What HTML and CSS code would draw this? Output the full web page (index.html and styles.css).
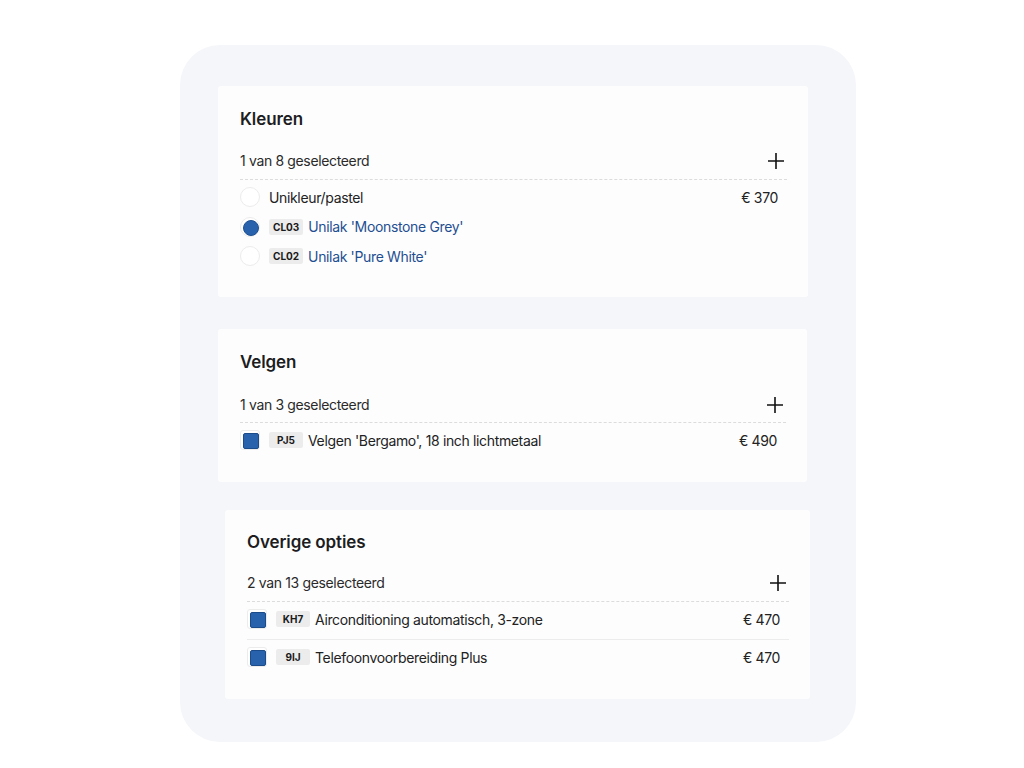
FILE: index.html
```html
<!DOCTYPE html>
<html lang="nl">
<head>
<meta charset="utf-8">
<title>Opties</title>
<link rel="stylesheet" href="styles.css">
</head>
<body>
<div class="panel">
  <section class="card card-colors">
    <h2 class="card-title">Kleuren</h2>
    <div class="summary">
      <span>1 van 8 geselecteerd</span>
      <svg class="plus" width="18" height="18" viewBox="0 0 18 18"><path d="M9 1v16M1 9h16" stroke="#111" stroke-width="1.6" fill="none"/></svg>
    </div>
    <ul class="rows">
      <li class="row">
        <span class="radio"></span>
        <span class="label">Unikleur/pastel</span>
        <span class="price">€ 370</span>
      </li>
      <li class="row">
        <span class="radio checked"></span>
        <span class="code">CL03</span>
        <span class="label link">Unilak 'Moonstone Grey'</span>
      </li>
      <li class="row">
        <span class="radio"></span>
        <span class="code">CL02</span>
        <span class="label link">Unilak 'Pure White'</span>
      </li>
    </ul>
  </section>

  <section class="card card-rims">
    <h2 class="card-title">Velgen</h2>
    <div class="summary">
      <span>1 van 3 geselecteerd</span>
      <svg class="plus" width="18" height="18" viewBox="0 0 18 18"><path d="M9 1v16M1 9h16" stroke="#111" stroke-width="1.6" fill="none"/></svg>
    </div>
    <ul class="rows">
      <li class="row">
        <span class="check"></span>
        <span class="code">PJ5</span>
        <span class="label">Velgen 'Bergamo', 18 inch lichtmetaal</span>
        <span class="price">€ 490</span>
      </li>
    </ul>
  </section>

  <section class="card card-other">
    <h2 class="card-title">Overige opties</h2>
    <div class="summary">
      <span>2 van 13 geselecteerd</span>
      <svg class="plus" width="18" height="18" viewBox="0 0 18 18"><path d="M9 1v16M1 9h16" stroke="#111" stroke-width="1.6" fill="none"/></svg>
    </div>
    <ul class="rows divided">
      <li class="row">
        <span class="check"></span>
        <span class="code">KH7</span>
        <span class="label">Airconditioning automatisch, 3-zone</span>
        <span class="price">€ 470</span>
      </li>
      <li class="row">
        <span class="check"></span>
        <span class="code">9IJ</span>
        <span class="label">Telefoonvoorbereiding Plus</span>
        <span class="price">€ 470</span>
      </li>
    </ul>
  </section>
</div>
</body>
</html>
```
FILE: styles.css
```css
* { box-sizing: border-box; }
html, body { margin: 0; padding: 0; background: #fff; }
body {
  font-family: Inter, "Noto Sans", "Liberation Sans", sans-serif;
  color: #222;
  padding: 45px 0 0 180px;
}
.panel {
  width: 676px;
  height: 697px;
  background: #f5f6fa;
  border-radius: 40px;
  padding: 41px 0 0 38px;
  display: flex;
  flex-direction: column;
}
.card {
  background: #fdfdfe;
  border-radius: 3px;
  padding: 22px 21px 30px 22px;
}
.card-colors { width: 590px; padding-bottom: 29px; }
.card-rims { width: 589px; margin-top: 32px; }
.card-other { width: 585px; margin-top: 28px; margin-left: 7px; padding-top: 21px; }
.card-title {
  margin: 0;
  font-size: 17px;
  line-height: 22px;
  font-weight: 600;
  color: #1d1d1f;
  letter-spacing: -0.1px;
}
.summary {
  margin-top: 21px;
  display: flex;
  align-items: center;
  justify-content: space-between;
  font-size: 14px;
  line-height: 20px;
  color: #2a2a2a;
  padding-bottom: 8px;
  border-bottom: 1px dashed #dcdcdc;
  letter-spacing: -0.35px;
}
.card-rims .summary { margin-top: 22px; padding-bottom: 7px; }
.card-other .summary { margin-top: 20px; }
.plus { margin-right: 2px; display: block; }
.rows {
  list-style: none;
  margin: 0;
  padding: 5px 0 0;
  display: flex;
  flex-direction: column;
  gap: 5.5px;
}
.row {
  display: flex;
  align-items: center;
  height: 24px;
  font-size: 14px;
  color: #222;
  letter-spacing: -0.35px;
}
.rows.divided { gap: 0; padding-top: 0; }
.rows.divided .row {
  height: 37px;
  padding: 5px 0 8px;
}
.rows.divided .row + .row { border-top: 1px solid #ececec; }
.rows.divided .row:last-child { height: 30px; padding-bottom: 0; }
.rows.divided .row:first-child:last-child { height: 29px; }
.radio {
  width: 20px;
  height: 20px;
  border-radius: 50%;
  border: 1px solid #ececec;
  background: #fff;
  margin-right: 9px;
  flex: none;
  position: relative;
}
.radio.checked::after {
  content: "";
  position: absolute;
  left: 2px; top: 2px;
  width: 14px; height: 14px;
  border-radius: 50%;
  background: #2862ad;
  border: 1px solid #1f5092;
}
.check {
  width: 20px;
  height: 20px;
  border-radius: 3px;
  border: 1px solid #ececec;
  background: #fff;
  margin-right: 9px;
  flex: none;
  position: relative;
}
.check::after {
  content: "";
  position: absolute;
  left: 2px; top: 2px;
  width: 14px; height: 14px;
  border-radius: 2px;
  background: #2862ad;
  border: 1px solid #1c4b8a;
}
.code {
  background: #ececec;
  color: #1a1a1a;
  font-size: 10px;
  font-weight: 700;
  line-height: 16px;
  height: 16px;
  min-width: 34px;
  padding: 0 4px;
  border-radius: 2px;
  text-align: center;
  margin-right: 5px;
  letter-spacing: 0;
}
.label { flex: 1; }
.label.link { color: #1f4f91; }
.price { margin-right: 9px; }
```
